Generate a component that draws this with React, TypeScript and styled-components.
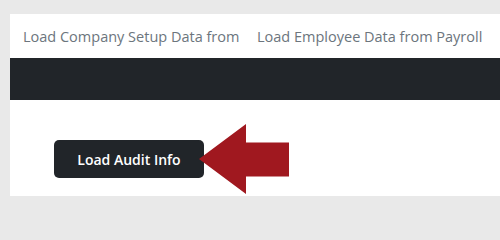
import styled, { createGlobalStyle } from 'styled-components';

const GlobalStyle = createGlobalStyle`
  html, body {
    margin: 0;
    padding: 0;
    background: #e9e9e9;
    overflow: hidden;
  }

  body {
    font-family: 'Open Sans', 'Liberation Sans', sans-serif;
  }
`;

const TABS = [
  { label: 'Load Company Setup Data from Payroll', clipped: true },
  { label: 'Load Employee Data from Payroll', clipped: false },
];

const App = () => {
  return (
    <>
      <GlobalStyle />
      <Page>
        <Panel>
          <TabRow>
            {TABS.map((tab) => (
              <Tab key={tab.label} $clipped={tab.clipped}>
                {tab.label}
              </Tab>
            ))}
          </TabRow>
          <DarkBar />
          <Content>
            <ActionRow>
              <LoadButton type="button">Load Audit Info</LoadButton>
              <Arrow width="90" height="70" viewBox="0 0 90 70" aria-hidden="true">
                <polygon
                  points="0,35 47,0 47,18.5 90,18.5 90,52.5 47,52.5 47,70"
                  fill="#a0181f"
                />
              </Arrow>
            </ActionRow>
          </Content>
        </Panel>
      </Page>
    </>
  );
};

const Page = styled.div`
  padding: 14px 0 10px 10px;
`;

const Panel = styled.div`
  background: #fff;
`;

const TabRow = styled.nav`
  display: flex;
  height: 44px;
  align-items: center;
  white-space: nowrap;
  overflow: hidden;
`;

const Tab = styled.span<{ $clipped: boolean }>`
  flex: none;
  box-sizing: border-box;
  width: ${({ $clipped }) => ($clipped ? '234px' : 'auto')};
  padding: 0 13px;
  overflow: hidden;
  font-size: 14.5px;
  color: #6c757d;
`;

const DarkBar = styled.div`
  height: 42px;
  background: #212529;
`;

const Content = styled.div`
  height: 96px;
  padding-left: 44px;
  display: flex;
  align-items: center;
  padding-top: 22px;
  box-sizing: border-box;
`;

const ActionRow = styled.div`
  display: flex;
  align-items: center;
`;

const LoadButton = styled.button`
  width: 150px;
  height: 38px;
  padding: 0;
  border: none;
  border-radius: 5px;
  background: #212529;
  color: #fff;
  font-family: 'Open Sans', 'Liberation Sans', sans-serif;
  font-size: 14px;
  font-weight: 600;
  cursor: pointer;
`;

const Arrow = styled.svg`
  display: block;
  margin-left: -5px;
`;

export default App;
